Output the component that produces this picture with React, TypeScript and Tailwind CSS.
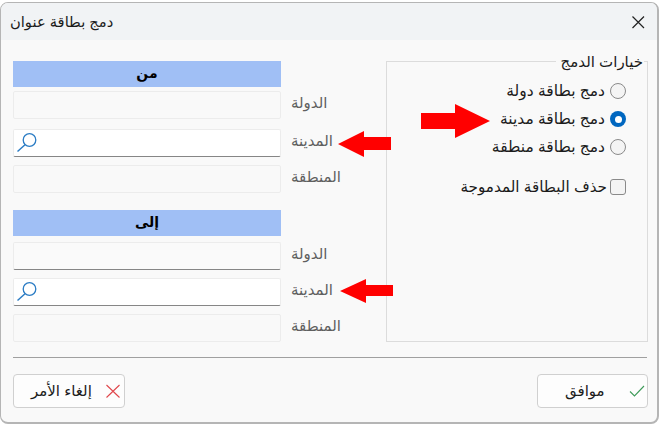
import React from 'react';

const font = "font-['Liberation_Sans','DejaVu_Sans',sans-serif]";

const SearchIcon = () => (
  <svg width="22" height="22" viewBox="0 0 22 22" fill="none" className="ml-[2px] -mt-[2px]">
    <circle cx="13.5" cy="9" r="6.3" stroke="#2b7cc4" strokeWidth="1.3" />
    <path d="M9 13.8 L1.5 20.5" stroke="#2b7cc4" strokeWidth="1.5" />
  </svg>
);

const Field = ({ label, kind, className = '' }: { label: string; kind: 'flat' | 'line' | 'search'; className?: string }) => {
  const box =
    kind === 'flat'
      ? 'bg-[#f9f9f9] border-[#ececec]'
      : kind === 'line'
        ? 'bg-[#fafafa] border-[#ececec] border-b-[#868686]'
        : 'bg-white border-[#ececec] border-b-[#868686]';
  return (
    <div className={`flex items-center h-[28px] ${className}`}>
      <div className={`w-[268px] h-[28px] border rounded-[2px] flex items-center ${box}`}>
        {kind === 'search' && <SearchIcon />}
      </div>
      <span dir="rtl" className="ml-[10px] mb-[5px] text-[15px] leading-none text-[#5f5f5f]">
        {label}
      </span>
    </div>
  );
};

const Section = ({ title, lined }: { title: string; lined?: boolean }) => (
  <div className="flex flex-col">
    <div className="w-[268px] h-[26px] bg-[#a0bff5] flex items-center justify-center pb-[1px] text-[14px] font-bold text-black">
      <span dir="rtl">{title}</span>
    </div>
    <Field label="الدولة" kind={lined ? 'line' : 'flat'} className={lined ? 'mt-[6px]' : 'mt-[4px]'} />
    <Field label="المدينة" kind="search" className={lined ? 'mt-[8px]' : 'mt-[10px]'} />
    <Field label="المنطقة" kind="flat" className="mt-[8px]" />
  </div>
);

const Radio = ({ label, checked }: { label: string; checked?: boolean }) => (
  <div className="flex items-center justify-end h-[20px] gap-[5px]">
    <span dir="rtl" className="text-[15.5px] leading-none text-[#1b1b1b]">{label}</span>
    {checked ? (
      <span className="w-[16px] h-[16px] rounded-full bg-[#0067c0] flex items-center justify-center">
        <span className="w-[7px] h-[7px] rounded-full bg-white" />
      </span>
    ) : (
      <span className="w-[16px] h-[16px] rounded-full border border-[#8a8a8a] bg-[#f4f4f4]" />
    )}
  </div>
);

const App = () => {
  return (
    <div className={`relative w-[661px] h-[425px] bg-white overflow-hidden ${font}`}>
      <div className="w-[659px] h-[422px] mt-[2px] rounded-[8px] border border-[#b5b5b5] border-b-2 border-r-2 bg-[#f9f9f9] overflow-hidden flex flex-col">
        <div className="h-[37px] bg-[#f1f3f5] flex items-center justify-between pl-[9px] pr-[12px] shrink-0">
          <span dir="rtl" className="pt-[1px] text-[14.7px] text-[#1b1b1b]">دمج بطاقة عنوان</span>
          <svg width="14" height="14" viewBox="0 0 14 14" fill="none">
            <path d="M1.5 1.5 L13 13 M13 1.5 L1.5 13" stroke="#222" strokeWidth="1.2" />
          </svg>
        </div>

        <div className="flex pl-[12px] pt-[21px]">
          <div className="flex flex-col gap-[17px] w-[373px]">
            <Section title="من" />
            <Section title="إلى" lined />
          </div>
          <div className="relative w-[262px] h-[281px] border border-[#dcdcdc] pr-[21px] pt-[19px]">
            <span dir="rtl" className="absolute right-[3px] -top-[9px] bg-[#f9f9f9] pl-[5px] pr-[1px] text-[15px] leading-[18px] text-[#1b1b1b]">
              خيارات الدمج
            </span>
            <div className="flex flex-col gap-[8px]">
              <Radio label="دمج بطاقة دولة" />
              <Radio label="دمج بطاقة مدينة" checked />
              <Radio label="دمج بطاقة منطقة" />
            </div>
            <div className="flex items-center justify-end h-[20px] gap-[3px] mt-[20px]">
              <span dir="rtl" className="text-[15.2px] leading-none text-[#1b1b1b]">حذف البطاقة المدموجة</span>
              <span className="w-[16px] h-[16px] rounded-[3px] border border-[#8a8a8a] bg-[#f4f4f4]" />
            </div>
          </div>
        </div>

        <div className="ml-[12px] w-[634px] h-px bg-[#a0a0a0] mt-[15px]" />

        <div className="flex justify-between ml-[12px] w-[635px] mt-[16px]">
          <button className="w-[112px] h-[34px] rounded-[4px] border border-[#d0d0d0] bg-[#fdfdfd] flex items-center justify-between pl-[17px] pr-[3px]">
            <svg width="16" height="16" viewBox="0 0 16 16" fill="none" className="order-2">
              <path d="M1.5 2 L14.5 14.5 M14.5 2 L1.5 14.5" stroke="#e0474c" strokeWidth="1.1" />
            </svg>
            <span dir="rtl" className="text-[15px] text-[#1b1b1b]">إلغاء الأمر</span>
          </button>
          <button className="w-[111px] h-[34px] rounded-[4px] border border-[#d0d0d0] bg-[#fdfdfd] flex items-center pl-[27px] pr-[2px] justify-between">
            <span dir="rtl" className="text-[15px] text-[#1b1b1b]">موافق</span>
            <svg width="16" height="14" viewBox="0 0 16 14" fill="none">
              <path d="M1 7.5 L5.5 12 L15 2" stroke="#3f9b5a" strokeWidth="1.1" />
            </svg>
          </button>
        </div>
      </div>

      {/* annotation arrows drawn over the dialog */}
      <svg width="53" height="26" viewBox="0 0 53 26" className="absolute left-[338px] top-[131px]">
        <path d="M0 13 L26 0 V6 H53 V19 H26 V26 Z" fill="#ff0000" />
      </svg>
      <svg width="53" height="24" viewBox="0 0 53 24" className="absolute left-[340px] top-[279px]">
        <path d="M0 12 L26 0 V6 H53 V17 H26 V24 Z" fill="#ff0000" />
      </svg>
      <svg width="70" height="34" viewBox="0 0 70 34" className="absolute left-[421px] top-[104px]">
        <path d="M0 9 H34 V0 L69 17 L34 34 V25 H0 Z" fill="#ff0000" />
      </svg>
    </div>
  );
};

export default App;
